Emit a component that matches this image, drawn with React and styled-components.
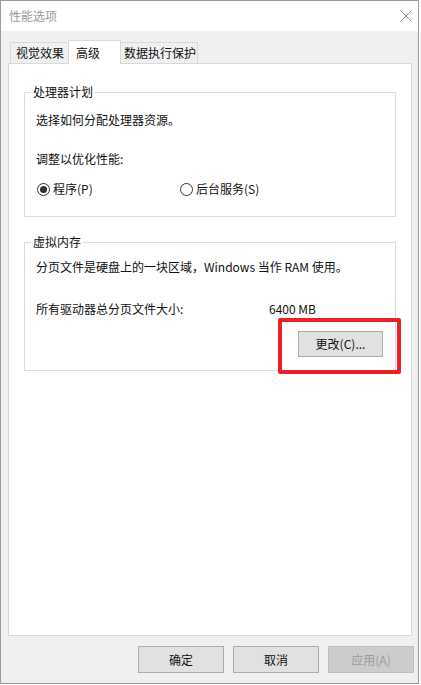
import styled, { createGlobalStyle } from 'styled-components';

const GlobalStyle = createGlobalStyle`
  * {
    margin: 0;
    padding: 0;
    box-sizing: border-box;
  }

  body {
    background-color: #ffffff;
    font-family: "Noto Sans CJK SC", "Noto Sans", sans-serif;
    font-size: 12px;
    line-height: 16px;
    color: #111;
  }
`;

const Window = styled.div`
  width: 419px;
  height: 684px;
  border: 1px solid #9a9a9a;
  display: flex;
  flex-direction: column;
  background: #fff;
`;

const TitleBar = styled.div`
  height: 30px;
  display: flex;
  align-items: center;
  justify-content: space-between;
  padding: 0 6px 0 8px;
  color: #9b9b9b;
  flex-shrink: 0;
`;

const Body = styled.div`
  flex: 1;
  background: #f0f0f0;
  display: flex;
  flex-direction: column;
  padding: 9px 6px 0 7px;
`;

const TabRow = styled.div`
  display: flex;
  align-items: flex-end;
  height: 23px;
  padding-left: 2px;
`;

const Tab = styled.div`
  width: ${p => p.$width}px;
  height: ${p => (p.$active ? 24 : 21)}px;
  margin-left: ${p => (p.$first ? 0 : -1)}px;
  margin-bottom: ${p => (p.$active ? -1 : 0)}px;
  padding-left: ${p => p.$pad}px;
  display: flex;
  align-items: ${p => (p.$active ? 'flex-start' : 'center')};
  padding-top: ${p => (p.$active ? 4 : 0)}px;
  background: ${p => (p.$active ? '#fff' : '#f0f0f0')};
  border: 1px solid #d9d9d9;
  border-bottom: none;
  position: relative;
  z-index: ${p => (p.$active ? 1 : 0)};
  white-space: nowrap;
`;

const Panel = styled.div`
  flex: 1;
  background: #fff;
  border: 1px solid #d9d9d9;
  padding: 0 15px;
  display: flex;
  flex-direction: column;
`;

const Group = styled.fieldset`
  border: 1px solid #dcdcdc;
  margin-top: ${p => p.$top}px;
  padding: ${p => p.$padTop}px 12px ${p => p.$padBottom}px 11px;
  display: flex;
  flex-direction: column;
  min-width: 0;
`;

const Legend = styled.legend`
  padding: 0 2px;
  margin-left: -5px;
  line-height: 16px;
`;

const Line = styled.div`
  margin-top: ${p => p.$gap || 0}px;
  white-space: nowrap;
`;

const RadioRow = styled.div`
  margin-top: 14px;
  display: grid;
  grid-template-columns: 143px auto;
  padding-left: 1px;
`;

const RadioItem = styled.label`
  display: flex;
  align-items: center;
  gap: 3px;
`;

const RadioCircle = styled.span`
  width: 13px;
  height: 13px;
  border-radius: 50%;
  border: 1px solid #333;
  background: #fff;
  display: flex;
  align-items: center;
  justify-content: center;

  &::after {
    content: '';
    width: 7px;
    height: 7px;
    border-radius: 50%;
    background: ${p => (p.$checked ? '#333' : 'transparent')};
  }
`;

const SizeRow = styled.div`
  margin-top: 26px;
  display: grid;
  grid-template-columns: 233px auto;
`;

const ButtonRow = styled.div`
  display: flex;
  justify-content: flex-end;
  margin-top: 14px;
`;

const Highlight = styled.div`
  position: relative;
`;

const RedBox = styled.div`
  position: absolute;
  left: -20px;
  right: -18px;
  top: -13px;
  bottom: -17px;
  border: 4px solid #e8222b;
  border-radius: 2px;
  pointer-events: none;
`;

const Button = styled.button`
  width: ${p => p.$width || 86}px;
  height: ${p => p.$height || 27}px;
  background: ${p => (p.disabled ? '#cccccc' : '#e1e1e1')};
  border: 1px solid ${p => (p.disabled ? '#bfbfbf' : '#adadad')};
  color: ${p => (p.disabled ? '#9a9a9a' : '#111')};
  font-family: inherit;
  font-size: 12px;
  line-height: 16px;
`;

const Footer = styled.div`
  display: flex;
  justify-content: flex-end;
  gap: 9px;
  padding: 10px 0 10px 0;
  margin-right: -2px;
`;

function CloseIcon() {
  return (
    <svg width="12" height="12" viewBox="0 0 12 12">
      <path d="M0.5 0.5 L11.5 11.5 M11.5 0.5 L0.5 11.5" stroke="#8f8f8f" strokeWidth="1" fill="none" />
    </svg>
  );
}

function Radio({ checked, children }) {
  return (
    <RadioItem>
      <RadioCircle $checked={checked} />
      <span>{children}</span>
    </RadioItem>
  );
}

export default function App() {
  return (
    <>
      <GlobalStyle />
      <Window>
        <TitleBar>
          <span>性能选项</span>
          <CloseIcon />
        </TitleBar>
        <Body>
          <TabRow>
            <Tab $first $width={59} $pad={5}>视觉效果</Tab>
            <Tab $active $width={53} $pad={7}>高级</Tab>
            <Tab $width={78} $pad={3}>数据执行保护</Tab>
          </TabRow>
          <Panel>
            <Group $top={20} $padTop={12} $padBottom={19}>
              <Legend>处理器计划</Legend>
              <Line>选择如何分配处理器资源。</Line>
              <Line $gap={23}>调整以优化性能:</Line>
              <RadioRow>
                <Radio checked>程序(P)</Radio>
                <Radio>后台服务(S)</Radio>
              </RadioRow>
            </Group>
            <Group $top={17} $padTop={9} $padBottom={13}>
              <Legend>虚拟内存</Legend>
              <Line>分页文件是硬盘上的一块区域，Windows 当作 RAM 使用。</Line>
              <SizeRow>
                <span>所有驱动器总分页文件大小:</span>
                <span>6400 MB</span>
              </SizeRow>
              <ButtonRow>
                <Highlight>
                  <Button $width={85} $height={26}>更改(C)...</Button>
                  <RedBox />
                </Highlight>
              </ButtonRow>
            </Group>
          </Panel>
          <Footer>
            <Button>确定</Button>
            <Button>取消</Button>
            <Button disabled>应用(A)</Button>
          </Footer>
        </Body>
      </Window>
    </>
  );
}
